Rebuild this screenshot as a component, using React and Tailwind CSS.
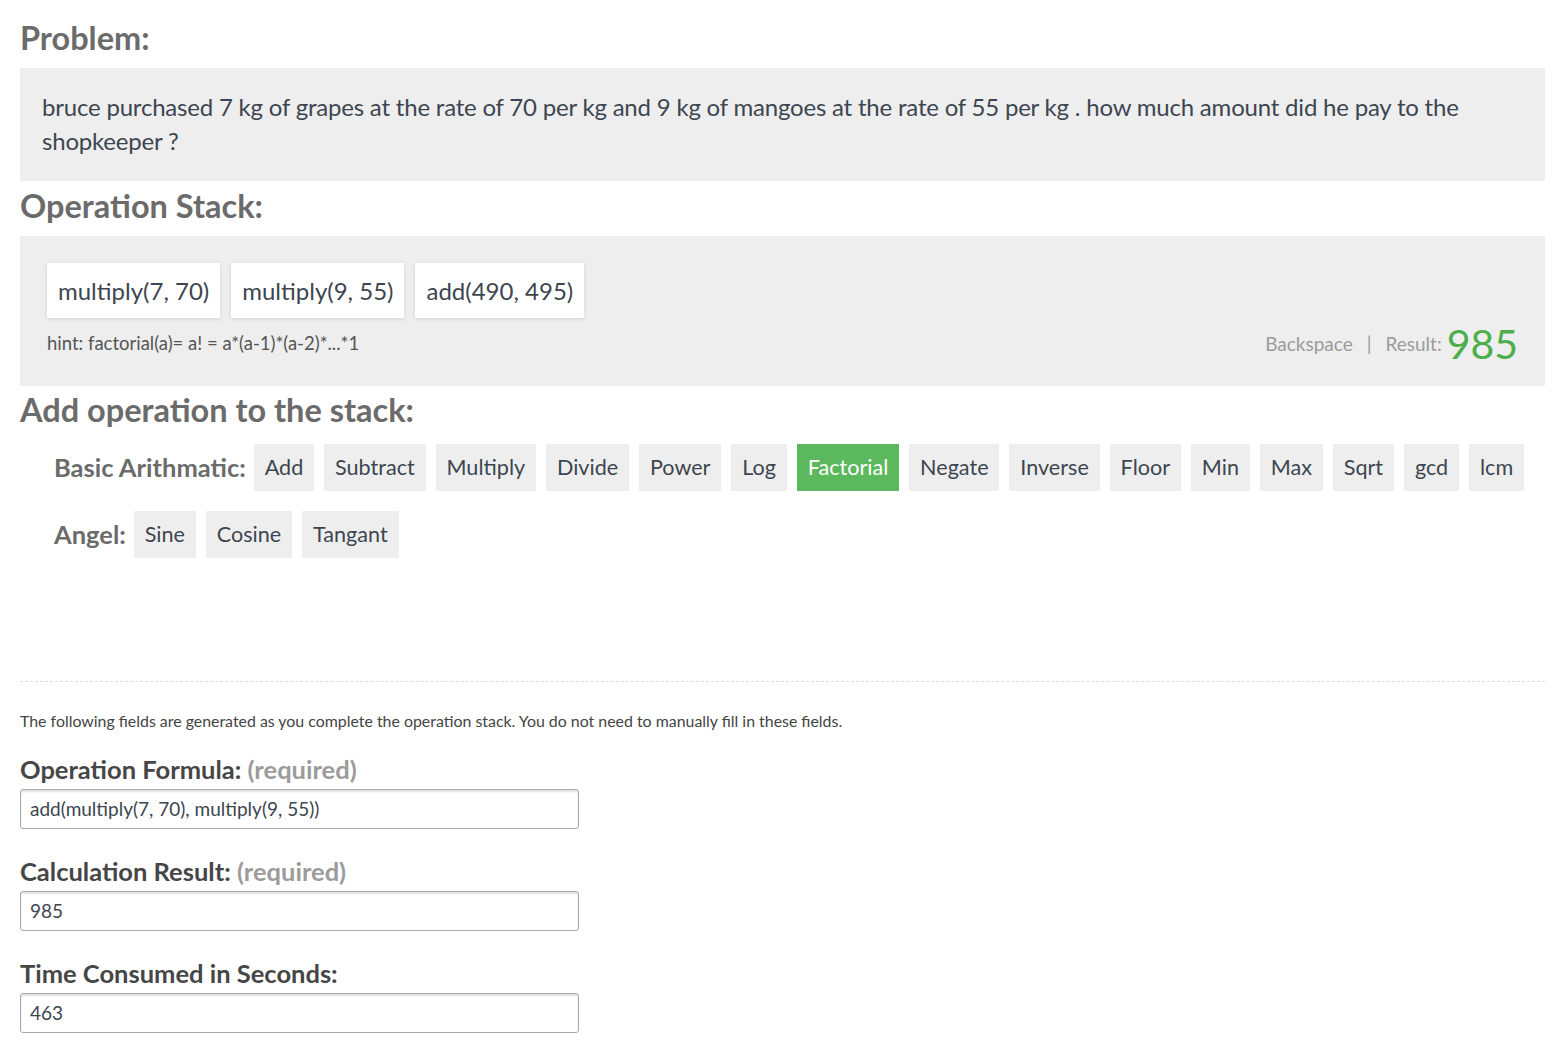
import React from 'react';

const ops = ['Add', 'Subtract', 'Multiply', 'Divide', 'Power', 'Log', 'Factorial', 'Negate', 'Inverse', 'Floor', 'Min', 'Max', 'Sqrt', 'gcd', 'lcm'];
const angles = ['Sine', 'Cosine', 'Tangant'];
const stack = ['multiply(7, 70)', 'multiply(9, 55)', 'add(490, 495)'];

function OpButton({ label, active }) {
  return (
    <button
      className={
        active
          ? 'h-[47px] px-[10.9px] bg-[#5cb85c] text-white text-[21.6px]'
          : 'h-[47px] px-[10.9px] bg-[#eeeeee] text-[#3d4650] text-[21.6px]'
      }
    >
      {label}
    </button>
  );
}

function Field({ label, required, value }) {
  return (
    <div className="mt-[27px] first:mt-0">
      <div className="text-[25.5px] leading-[30px] font-bold text-[#464646]">
        {label} {required && <span className="text-[#9b9b9b]">(required)</span>}
      </div>
      <input
        readOnly
        value={value}
        className="mt-[5px] w-[559px] h-[40px] px-[9px] border border-[#a9a9a9] rounded-[3px] shadow-[inset_0_2px_2px_rgba(0,0,0,0.12)] text-[19px] text-[#3d4650] outline-none"
      />
    </div>
  );
}

export default function App() {
  return (
    <div className="min-h-screen bg-white px-5 pt-[19px] font-['Lato',sans-serif]">
      {/* Problem */}
      <h2 className="text-[32.5px] leading-[38px] font-bold text-[#6b6b6b]">Problem:</h2>
      <div className="mt-[11px] bg-[#eeeeee] px-[22px] pt-[22px] pb-[23px] text-[24px] leading-[34px] text-[#3d4650] tracking-[-0.2px]">
        bruce purchased 7 kg of grapes at the rate of 70 per kg and 9 kg of mangoes at the rate of 55 per kg . how much amount did he pay to the shopkeeper ?
      </div>

      {/* Operation stack */}
      <h2 className="mt-[6px] text-[32.5px] leading-[38px] font-bold text-[#6b6b6b]">Operation Stack:</h2>
      <div className="mt-[11px] bg-[#eeeeee] px-[27px] pt-[27px] pb-[21px]">
        <div className="flex gap-[11px]">
          {stack.map((s) => (
            <div
              key={s}
              className="h-[55px] px-[11px] flex items-center bg-white shadow-[0_1px_4px_rgba(0,0,0,0.12)] text-[24px] text-[#3d4650]"
            >
              {s}
            </div>
          ))}
        </div>
        <div className="mt-[5px] h-[42px] flex items-center justify-between">
          <div className="text-[18.5px] text-[#555555]">
            hint: factorial(a)= a! = a*(a-1)*(a-2)*...*1
          </div>
          <div className="flex items-center text-[19px] text-[#9b9b9b]">
            <span>Backspace</span>
            <span className="mx-[14px]">|</span>
            <span>Result:</span>
            <span className="ml-[5px] text-[41px] leading-[42px] text-[#4cae4c]">985</span>
          </div>
        </div>
      </div>

      {/* Add operation */}
      <h2 className="mt-[5px] text-[32.5px] leading-[38px] font-bold text-[#6b6b6b]">Add operation to the stack:</h2>
      <div className="mt-[15px] pl-[34px]">
        <div className="flex items-center gap-[10px]">
          <span className="mr-[-2px] text-[25.5px] font-bold text-[#6b6b6b]">Basic Arithmatic:</span>
          {ops.map((o) => (
            <OpButton key={o} label={o} active={o === 'Factorial'} />
          ))}
        </div>
        <div className="mt-[20px] flex items-center gap-[10px]">
          <span className="mr-[-2px] text-[25.5px] font-bold text-[#6b6b6b]">Angel:</span>
          {angles.map((o) => (
            <OpButton key={o} label={o} />
          ))}
        </div>
      </div>

      {/* Generated fields */}
      <div className="mt-[123px] border-t border-dashed border-[#dddddd]" />
      <p className="mt-[27px] text-[15.9px] text-[#444444]">
        The following fields are generated as you complete the operation stack. You do not need to manually fill in these fields.
      </p>
      <div className="mt-[21px] pb-[20px]">
        <Field label="Operation Formula:" required value="add(multiply(7, 70), multiply(9, 55))" />
        <Field label="Calculation Result:" required value="985" />
        <Field label="Time Consumed in Seconds:" value="463" />
      </div>
    </div>
  );
}
